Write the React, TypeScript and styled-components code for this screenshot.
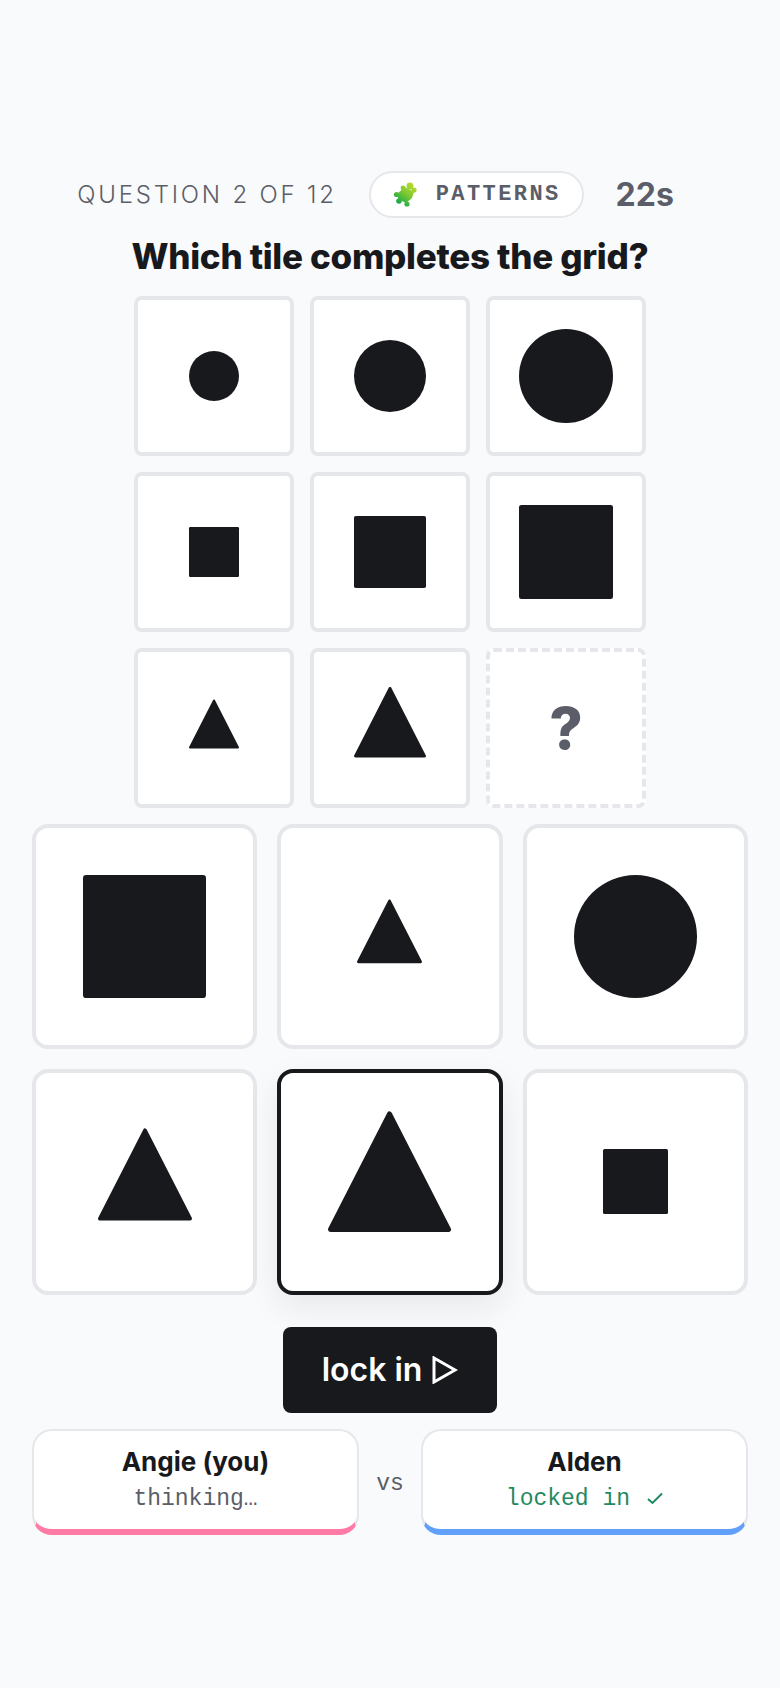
import React from 'react'
import styled, { createGlobalStyle } from 'styled-components'

const ink = '#17191c'
const line = '#e5e7eb'

const GlobalStyle = createGlobalStyle`
  html, body {
    margin: 0;
    padding: 0;
    background: #f9fafb;
  }
  body {
    font-family: Inter, "Liberation Sans", sans-serif;
    color: ${ink};
  }
`

const Page = styled.div`
  width: 780px;
  height: 1688px;
  padding: 170px 32px 0;
  box-sizing: border-box;
  display: flex;
  flex-direction: column;
  align-items: center;
`

const MetaRow = styled.div`
  display: flex;
  align-items: center;
  gap: 32px;
  height: 48px;
  margin-right: 29px;
`

const QuestionCount = styled.span`
  font-size: 24px;
  font-weight: 300;
  letter-spacing: 2.8px;
  color: #5b5e68;
`

const CategoryPill = styled.div`
  display: flex;
  align-items: center;
  gap: 18px;
  height: 47px;
  padding: 0 21px;
  box-sizing: border-box;
  background: #fff;
  border: 2px solid ${line};
  border-radius: 24px;
  font-family: "Liberation Mono", monospace;
  font-size: 22px;
  font-weight: 700;
  letter-spacing: 2.4px;
  color: #5b5e68;
`

const Timer = styled.span`
  font-size: 32px;
  font-weight: 700;
  color: #5b5e68;
`

const Title = styled.h1`
  margin: 16px 0 18px;
  font-size: 35px;
  line-height: 44px;
  font-weight: 800;
  letter-spacing: -0.3px;
`

const PatternGrid = styled.div`
  display: grid;
  grid-template-columns: repeat(3, 160px);
  grid-auto-rows: 160px;
  gap: 16px;
`

const OptionGrid = styled.div`
  display: grid;
  grid-template-columns: repeat(3, 1fr);
  gap: 20px;
  width: 100%;
  margin-top: 16px;
`

const Tile = styled.div<{ $selected?: boolean; $missing?: boolean; $radius: number }>`
  display: flex;
  align-items: center;
  justify-content: center;
  aspect-ratio: 1;
  box-sizing: border-box;
  background: #fff;
  border: 4px ${p => (p.$missing ? 'dashed' : 'solid')} ${p => (p.$selected ? ink : line)};
  border-radius: ${p => p.$radius}px;
  box-shadow: ${p => (p.$selected ? '0 12px 32px rgba(23, 25, 29, 0.08)' : 'none')};
`

const QuestionMark = styled.span`
  font-size: 58px;
  font-weight: 800;
  color: #5b5e68;
`

const ShapeSvg = styled.svg`
  overflow: visible;
  fill: ${ink};
`

const LockButton = styled.button`
  display: flex;
  align-items: center;
  justify-content: center;
  gap: 10px;
  width: 214px;
  height: 86px;
  margin-top: 32px;
  border: 0;
  border-radius: 8px;
  background: ${ink};
  color: #fff;
  font-family: inherit;
  font-size: 32px;
  font-weight: 600;
`

const PlayersRow = styled.div`
  display: flex;
  align-items: center;
  justify-content: space-between;
  width: 100%;
  margin-top: 16px;
`

const PlayerCard = styled.div<{ $accent: string }>`
  display: flex;
  flex-direction: column;
  align-items: center;
  width: 327px;
  height: 106px;
  padding-top: 15px;
  box-sizing: border-box;
  background: #fff;
  border: 2px solid ${line};
  border-bottom: 6px solid ${p => p.$accent};
  border-radius: 20px;
`

const PlayerName = styled.div`
  font-size: 26px;
  line-height: 32px;
  font-weight: 700;
`

const PlayerStatus = styled.div<{ $color: string }>`
  display: flex;
  align-items: center;
  margin-top: 7px;
  font-family: "Liberation Mono", monospace;
  font-size: 23px;
  line-height: 28px;
  color: ${p => p.$color};
`

const CheckSvg = styled.svg`
  margin-left: 17px;
  fill: none;
  stroke: #1f8a5f;
  stroke-width: 2;
`

const Versus = styled.span`
  margin-top: 4px;
  font-family: "Liberation Mono", monospace;
  font-size: 23px;
  color: #5b5e68;
`

type ShapeKind = 'circle' | 'square' | 'triangle'

// triangle sits a bit above the tile centre in the reference, hence its own viewBox
const Shape: React.FC<{ kind: ShapeKind; size: number }> = ({ kind, size }) => (
  <ShapeSvg width={size} height={size} viewBox={kind === 'triangle' ? '0 8 100 100' : '0 0 100 100'} aria-hidden>
    {kind === 'circle' && <circle cx="50" cy="50" r="50" />}
    {kind === 'square' && <rect width="100" height="100" rx="2.5" />}
    {kind === 'triangle' && (
      <polygon
        points="50,3 98,97 2,97"
        stroke={ink}
        strokeWidth="4"
        strokeLinejoin="round"
      />
    )}
  </ShapeSvg>
)

const PuzzleIcon = () => (
  <svg width="26" height="26" viewBox="0 0 26 26" aria-hidden>
    <defs>
      <linearGradient id="puzzle" gradientUnits="userSpaceOnUse" x1="22" y1="2" x2="6" y2="24">
        <stop offset="0" stopColor="#c2dc2e" />
        <stop offset="0.5" stopColor="#7cc832" />
        <stop offset="1" stopColor="#06a44c" />
      </linearGradient>
    </defs>
    <g fill="url(#puzzle)">
      <polygon points="13,6 22,11 20,17 14,22 6,18 6,12" />
      <circle cx="18" cy="5" r="3.4" />
      <circle cx="22" cy="9" r="2.6" />
      <circle cx="11" cy="7" r="2.4" />
      <circle cx="4.5" cy="13.5" r="2.6" />
      <circle cx="7" cy="20" r="2.8" />
      <circle cx="15" cy="23" r="2.6" />
    </g>
  </svg>
)

const PlayIcon = () => (
  <svg width="26" height="28" viewBox="0 0 26 28" fill="none" stroke="#fff" strokeWidth="3" aria-hidden>
    <polygon points="2,2 23,14 2,26" />
  </svg>
)

const CheckIcon = () => (
  <CheckSvg width="16" height="13" viewBox="0 0 16 13" aria-hidden>
    <path d="M1 7 L5.5 11 L15 1.5" />
  </CheckSvg>
)

const patternTiles: { kind: ShapeKind; size: number }[] = [
  { kind: 'circle', size: 50 },
  { kind: 'circle', size: 72 },
  { kind: 'circle', size: 94 },
  { kind: 'square', size: 50 },
  { kind: 'square', size: 72 },
  { kind: 'square', size: 94 },
  { kind: 'triangle', size: 50 },
  { kind: 'triangle', size: 72 },
]

const optionTiles: { kind: ShapeKind; size: number; selected?: boolean }[] = [
  { kind: 'square', size: 123 },
  { kind: 'triangle', size: 65 },
  { kind: 'circle', size: 123 },
  { kind: 'triangle', size: 94 },
  { kind: 'triangle', size: 123, selected: true },
  { kind: 'square', size: 65 },
]

export default function App() {
  return (
    <>
      <GlobalStyle />
      <Page>
        <MetaRow>
          <QuestionCount>QUESTION 2 OF 12</QuestionCount>
          <CategoryPill>
            <PuzzleIcon />
            PATTERNS
          </CategoryPill>
          <Timer>22s</Timer>
        </MetaRow>
        <Title>Which tile completes the grid?</Title>
        <PatternGrid>
          {patternTiles.map((t, i) => (
            <Tile key={i} $radius={8}>
              <Shape kind={t.kind} size={t.size} />
            </Tile>
          ))}
          <Tile $radius={8} $missing>
            <QuestionMark>?</QuestionMark>
          </Tile>
        </PatternGrid>
        <OptionGrid>
          {optionTiles.map((t, i) => (
            <Tile key={i} $radius={16} $selected={t.selected}>
              <Shape kind={t.kind} size={t.size} />
            </Tile>
          ))}
        </OptionGrid>
        <LockButton>
          lock in
          <PlayIcon />
        </LockButton>
        <PlayersRow>
          <PlayerCard $accent="#ff7aa5">
            <PlayerName>Angie (you)</PlayerName>
            <PlayerStatus $color="#5b5e68">thinking…</PlayerStatus>
          </PlayerCard>
          <Versus>vs</Versus>
          <PlayerCard $accent="#60a0fa">
            <PlayerName>Alden</PlayerName>
            <PlayerStatus $color="#1f8a5f">
              locked in
              <CheckIcon />
            </PlayerStatus>
          </PlayerCard>
        </PlayersRow>
      </Page>
    </>
  )
}
